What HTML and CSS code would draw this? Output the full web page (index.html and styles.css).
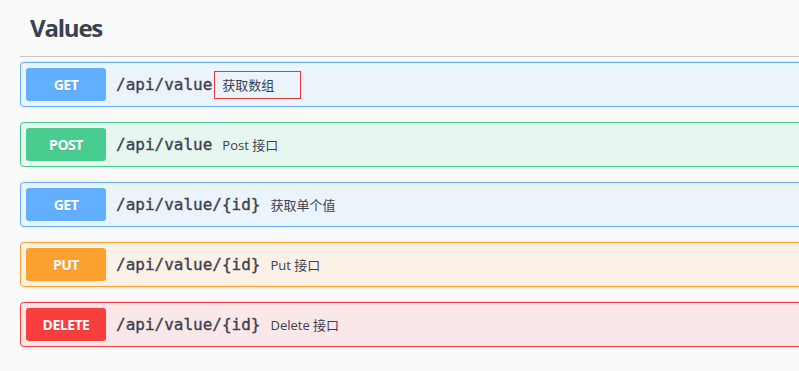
FILE: index.html
```html
<!DOCTYPE html>
<html>
<head>
<meta charset="utf-8">
<link rel="stylesheet" href="styles.css">
</head>
<body>
<div class="section">
  <h3 class="tag"><span class="tag-name">Values</span></h3>
  <div class="ops">
    <div class="op op-get">
      <span class="method">GET</span>
      <span class="path">/api/value</span>
      <span class="desc highlight">获取数组</span>
    </div>
    <div class="op op-post">
      <span class="method">POST</span>
      <span class="path">/api/value</span>
      <span class="desc">Post 接口</span>
    </div>
    <div class="op op-get">
      <span class="method">GET</span>
      <span class="path">/api/value/{id}</span>
      <span class="desc">获取单个值</span>
    </div>
    <div class="op op-put">
      <span class="method">PUT</span>
      <span class="path">/api/value/{id}</span>
      <span class="desc">Put 接口</span>
    </div>
    <div class="op op-delete">
      <span class="method">DELETE</span>
      <span class="path">/api/value/{id}</span>
      <span class="desc">Delete 接口</span>
    </div>
  </div>
</div>
</body>
</html>
```

FILE: styles.css
```css
html, body {
  margin: 0;
  padding: 0;
  background: #fafafa;
  overflow: hidden;
}
body {
  width: 799px;
  height: 371px;
  font-family: "Open Sans", "Noto Sans CJK SC", sans-serif;
  color: #3b4151;
}
.section {
  margin-left: 20px;
  width: 779px;
  overflow: hidden;
}
.tag {
  margin: 0;
  height: 57px;
  box-sizing: border-box;
  padding: 10px 0 0 10px;
  border-bottom: 1px solid #c4c6cb;
  font-family: "Open Sans", sans-serif;
  font-weight: 700;
  font-size: 24px;
  letter-spacing: -1.2px;
  line-height: 36px;
  color: #3b4151;
}
.ops {
  display: flex;
  flex-direction: column;
  gap: 15px;
  padding-top: 5px;
  width: 820px;
}
.op {
  display: flex;
  align-items: center;
  height: 45px;
  box-sizing: border-box;
  padding: 5px;
  border: 1px solid;
  border-radius: 4px;
  box-shadow: 0 0 3px rgba(0,0,0,.1);
}
.method {
  width: 80px;
  height: 33px;
  flex: none;
  display: flex;
  align-items: center;
  justify-content: center;
  border-radius: 3px;
  color: #fff;
  font-family: "Open Sans", sans-serif;
  font-weight: 700;
  font-size: 14px;
  letter-spacing: -0.5px;
  text-shadow: 0 1px 0 rgba(0,0,0,.1);
}
.path {
  padding: 0 10px;
  font-family: "DejaVu Sans Mono", monospace;
  font-size: 16px;
  font-weight: 400;
  -webkit-text-stroke: 0.35px #3b4151;
  color: #3b4151;
}
.desc {
  font-size: 13px;
  color: #3b4151;
  line-height: 26px;
}
.highlight {
  margin-left: -8px;
  padding: 0 26px 0 7px;
  border: 1px solid #e5393f;
  width: 52px;
}
.op-get { border-color: #61affe; background: #ebf3fb; }
.op-get .method { background: #61affe; }
.op-post { border-color: #49cc90; background: #e8f6f0; }
.op-post .method { background: #49cc90; }
.op-put { border-color: #fca130; background: #fbf1e6; }
.op-put .method { background: #fca130; }
.op-delete { border-color: #f93e3e; background: #fae7e7; }
.op-delete .method { background: #f93e3e; }
```
